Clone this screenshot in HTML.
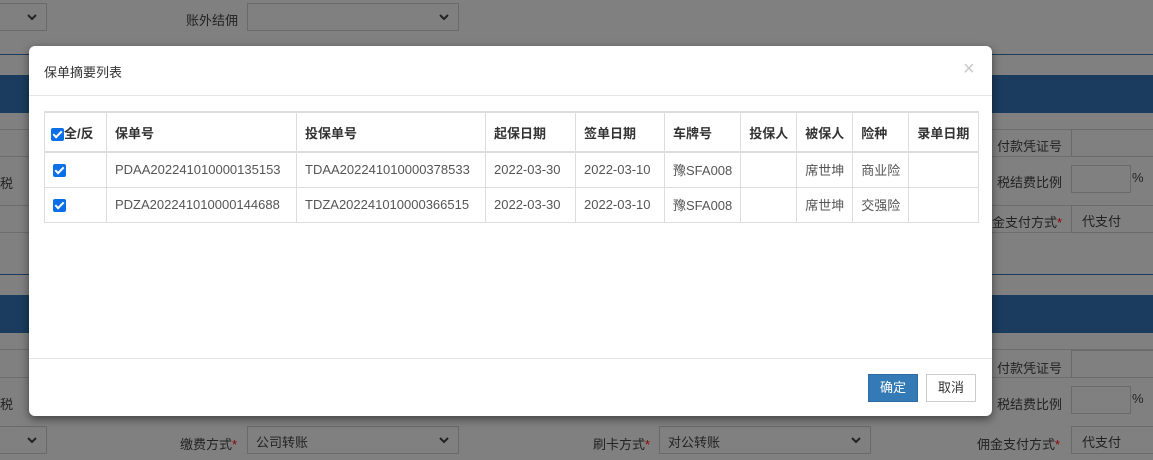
<!DOCTYPE html>
<html><head><meta charset="utf-8"><style>
*{box-sizing:border-box;margin:0;padding:0}
body{width:1153px;height:460px;overflow:hidden;background:#808080;font-family:"Liberation Sans","Noto Sans CJK SC",sans-serif;font-size:13px;color:#333;position:relative}
.a{position:absolute}
.ln{position:absolute;left:0;width:1153px;height:1px;background:#6e6e6e}
.bar{position:absolute;left:0;width:1153px;height:38px;background:#1b3c5e}
.sel{position:absolute;border:1px solid #6a6a6a;height:28px;background:#808080;color:#222;padding:5px 8px;font-size:13px}
.sel svg{position:absolute;right:9px;top:10px}
.lbl{position:absolute;color:#222;font-size:13px}
.st{color:#8b0000}
.modal{position:absolute;left:29px;top:46px;width:963px;height:370px;background:#fff;border-radius:6px;box-shadow:0 3px 9px rgba(0,0,0,.5)}
table{position:absolute;left:15px;top:65px;border-collapse:collapse;font-size:13px}
td,th{border:1px solid #ddd;padding:0 8px;text-align:left;white-space:nowrap;color:#333}
th{height:40px;border-top:2px solid #ddd;border-bottom:2px solid #ddd;font-weight:bold}
td{height:35px;color:#555}
.cb{display:inline-block;width:13px;height:13px;background:#0b6fe8;border-radius:2px;position:relative;vertical-align:middle}
.cb:after{content:"";position:absolute;left:4px;top:1px;width:3px;height:7px;border:solid #fff;border-width:0 2px 2px 0;transform:rotate(45deg)}
.btn{position:absolute;top:328px;height:28px;width:50px;font-size:13px;text-align:center;line-height:26px;border:1px solid}
</style></head><body>
<div class="sel" style="left:-10px;top:3px;width:57px"><svg width="10" height="7"><path d="M1 1L5 5L9 1" stroke="#222" stroke-width="2" fill="none"/></svg></div>
<div class="lbl" style="left:186px;top:10px">账外结佣</div>
<div class="sel" style="left:247px;top:3px;width:212px"><svg width="10" height="7"><path d="M1 1L5 5L9 1" stroke="#222" stroke-width="2" fill="none"/></svg></div>
<div class="a" style="left:0;top:54px;width:1153px;height:1px;background:#1b3c5e"></div>
<div class="bar" style="top:75px"></div>
<div class="ln" style="top:129px"></div>
<div class="ln" style="top:156px"></div>
<div class="ln" style="top:205px"></div>
<div class="ln" style="top:232px"></div>
<div class="a" style="left:0;top:274px;width:1153px;height:1px;background:#1b3c5e"></div>
<div class="bar" style="top:295px"></div>
<div class="ln" style="top:349px"></div>
<div class="ln" style="top:377px"></div>
<div class="lbl" style="left:0;top:173px">税</div>
<div class="lbl" style="left:0;top:394px">税</div>
<div class="lbl" style="left:997px;top:136px">付款凭证号</div>
<div class="a" style="left:1071px;top:129px;width:90px;height:28px;border:1px solid #6a6a6a"></div>
<div class="lbl" style="left:997px;top:172px">税结费比例</div>
<div class="a" style="left:1071px;top:165px;width:60px;height:28px;border:1px solid #6a6a6a"></div>
<div class="lbl" style="left:1132px;top:170px">%</div>
<div class="lbl" style="left:992px;top:212px">金支付方式<span class="st">*</span></div>
<div class="a" style="left:1071px;top:205px;width:90px;height:28px;border:1px solid #6a6a6a;padding:5px 10px;color:#222">代支付</div>
<div class="lbl" style="left:997px;top:358px">付款凭证号</div>
<div class="a" style="left:1071px;top:350px;width:90px;height:28px;border:1px solid #6a6a6a"></div>
<div class="lbl" style="left:997px;top:394px">税结费比例</div>
<div class="a" style="left:1071px;top:386px;width:60px;height:28px;border:1px solid #6a6a6a"></div>
<div class="lbl" style="left:1132px;top:391px">%</div>
<div class="sel" style="left:-10px;top:426px;width:57px"><svg width="10" height="7"><path d="M1 1L5 5L9 1" stroke="#222" stroke-width="2" fill="none"/></svg></div>
<div class="lbl" style="left:180px;top:434px">缴费方式<span class="st">*</span></div>
<div class="sel" style="left:247px;top:426px;width:212px">公司转账<svg width="10" height="7"><path d="M1 1L5 5L9 1" stroke="#222" stroke-width="2" fill="none"/></svg></div>
<div class="lbl" style="left:593px;top:434px">刷卡方式<span class="st">*</span></div>
<div class="sel" style="left:659px;top:426px;width:212px">对公转账<svg width="10" height="7"><path d="M1 1L5 5L9 1" stroke="#222" stroke-width="2" fill="none"/></svg></div>
<div class="lbl" style="left:977px;top:434px">佣金支付方式<span class="st">*</span></div>
<div class="a" style="left:1071px;top:426px;width:90px;height:28px;border:1px solid #6a6a6a;padding:5px 10px;color:#222">代支付</div>

<div class="modal">
<div class="a" style="left:15px;top:16px;font-size:13px;color:#333">保单摘要列表</div>
<div class="a" style="left:934px;top:13px;font-size:20px;color:#c8c8c8;line-height:20px">×</div>
<div class="a" style="left:0;top:49px;width:963px;height:1px;background:#e5e5e5"></div>
<table>
<tr><th style="width:62px;padding:0 6px"><span class="cb"></span>全/反</th><th style="width:190px">保单号</th><th style="width:189px">投保单号</th><th style="width:90px">起保日期</th><th style="width:89px">签单日期</th><th style="width:75px">车牌号</th><th style="width:56px">投保人</th><th style="width:56px">被保人</th><th style="width:56px">险种</th><th style="width:70px">录单日期</th></tr>
<tr><td style="padding:0 8px"><span class="cb"></span></td><td>PDAA202241010000135153</td><td>TDAA202241010000378533</td><td>2022-03-30</td><td>2022-03-10</td><td>豫SFA008</td><td></td><td>席世坤</td><td>商业险</td><td></td></tr>
<tr><td style="padding:0 8px"><span class="cb"></span></td><td>PDZA202241010000144688</td><td>TDZA202241010000366515</td><td>2022-03-30</td><td>2022-03-10</td><td>豫SFA008</td><td></td><td>席世坤</td><td>交强险</td><td></td></tr>
</table>
<div class="a" style="left:0;top:312px;width:963px;height:1px;background:#e5e5e5"></div>
<div class="btn" style="left:839px;background:#337ab7;border-color:#2e6da4;color:#fff">确定</div>
<div class="btn" style="left:897px;background:#fff;border-color:#ccc;color:#333">取消</div>
</div>
</body></html>
